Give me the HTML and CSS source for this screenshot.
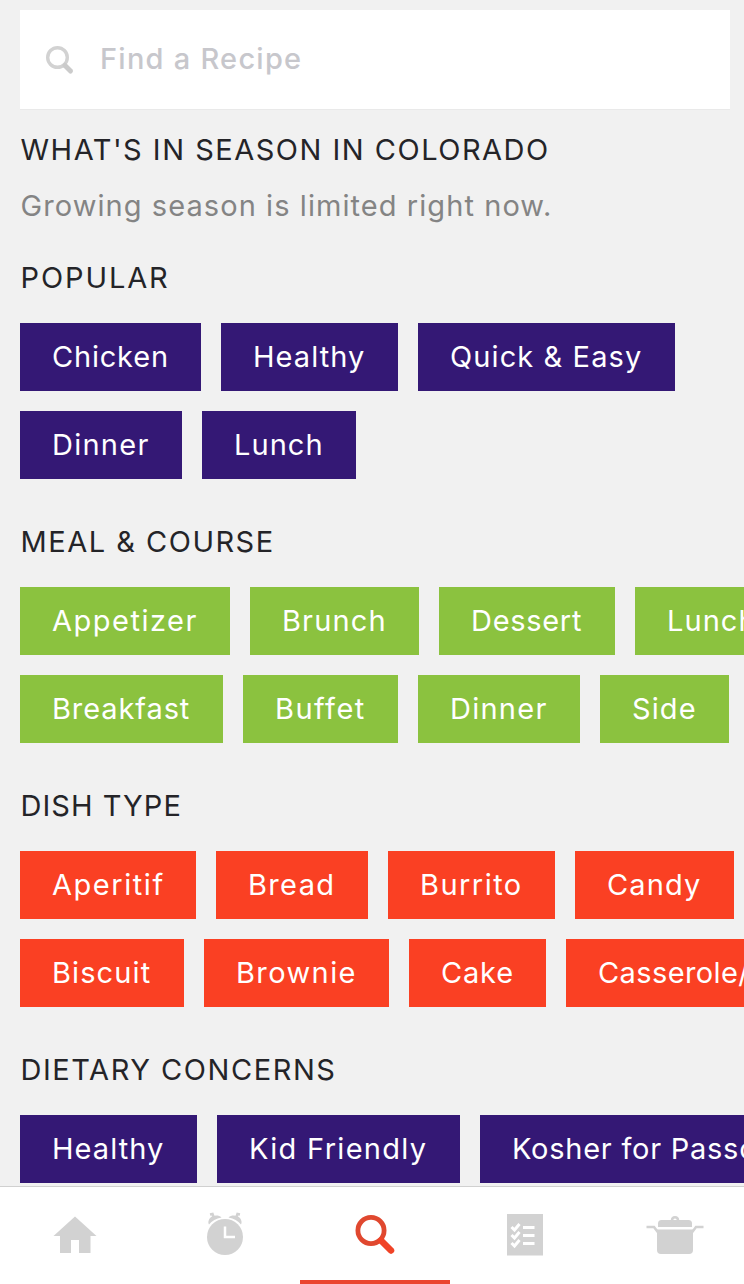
FILE: index.html
```
<!DOCTYPE html>
<html lang="en">
<head>
<meta charset="utf-8">
<meta name="viewport" content="width=device-width">
<title>Find a Recipe</title>
<link rel="stylesheet" href="styles.css">
</head>
<body>

<main class="content">
  <div class="search">
    <svg class="search-icon" width="30" height="30" viewBox="0 0 30 30">
      <circle cx="12.5" cy="12.500" r="9.8" fill="none" stroke="#d2d2d2" stroke-width="3.400"/>
      <path d="M20 20.5L25.5 26" stroke="#cbcbcb" stroke-width="5" stroke-linecap="round"/>
    </svg>
    <span class="placeholder">Find a Recipe</span>
  </div>

  <section class="season">
    <h2>What's in Season in Colorado</h2>
    <p>Growing season is limited right now.</p>
  </section>

  <section class="group purple">
    <h2 class="popular">Popular</h2>
    <div class="row">
      <a class="chip chicken">Chicken</a>
      <a class="chip healthy">Healthy</a>
      <a class="chip quick">Quick &amp; Easy</a>
    </div>
    <div class="row">
      <a class="chip dinner">Dinner</a>
      <a class="chip lunch">Lunch</a>
    </div>
  </section>

  <section class="group green">
    <h2>Meal &amp; Course</h2>
    <div class="row">
      <a class="chip appetizer">Appetizer</a>
      <a class="chip brunch">Brunch</a>
      <a class="chip dessert">Dessert</a>
      <a class="chip lunch">Lunch</a>
    </div>
    <div class="row">
      <a class="chip breakfast">Breakfast</a>
      <a class="chip buffet">Buffet</a>
      <a class="chip dinner">Dinner</a>
      <a class="chip side">Side</a>
    </div>
  </section>

  <section class="group red">
    <h2 class="dish">Dish Type</h2>
    <div class="row">
      <a class="chip aperitif">Aperitif</a>
      <a class="chip bread">Bread</a>
      <a class="chip burrito">Burrito</a>
      <a class="chip candy">Candy</a>
    </div>
    <div class="row">
      <a class="chip biscuit">Biscuit</a>
      <a class="chip brownie">Brownie</a>
      <a class="chip cake">Cake</a>
      <a class="chip casserole">Casserole/</a>
    </div>
  </section>

  <section class="group purple">
    <h2 class="dietary">Dietary Concerns</h2>
    <div class="row">
      <a class="chip healthy">Healthy</a>
      <a class="chip kid">Kid Friendly</a>
      <a class="chip kosher">Kosher for Passover</a>
    </div>
  </section>
</main>

<nav class="tabs">
  <a class="tab">
    <svg viewBox="0 0 150 97">
      <path d="M75 29.5L96.5 49H90.5V66H79V53H71V66H60V49H53.5Z"/>
    </svg>
  </a>
  <a class="tab">
    <svg viewBox="0 0 150 97">
      <circle cx="75" cy="50" r="18"/>
      <path d="M59 37.5C57.5 35 59 31 62 29.500C65 28 69 28 71.500 30.500C66 31.500 62 34 59 37.500Z"/>
      <path d="M91 37.500C92.500 35 91 31 88 29.500C85 28 81 28 78.500 30.500C84 31.500 88 34 91 37.500Z"/>
      <path class="bell" d="M60 27.500L62.500 27L63.500 30M90 27.500L87.500 27L86.500 30"/>
      <path class="hands" d="M75 39.500V50H85"/>
    </svg>
  </a>
  <a class="tab active">
    <svg viewBox="0 0 150 97">
      <circle class="lens" cx="71" cy="43.500" r="13.100"/>
      <path class="handle" d="M81 53.500L91 63.500"/>
    </svg>
  </a>
  <a class="tab">
    <svg viewBox="0 0 150 97">
      <path d="M57 27H93V68.500H57Z"/>
      <path class="checks" d="M61.500 40L64.500 43L69.500 37M61.500 48L64.500 51L69.500 45M61.500 56L64.500 59L69.500 53"/>
      <path class="lines" d="M73 40.500H84.500M73 48.500H84.500M73 56.500H84.500"/>
    </svg>
  </a>
  <a class="tab">
    <svg viewBox="0 0 150 97">
      <path d="M58 40V36.500Q58 33 61.500 33H88.500Q92 33 92 36.500V40Z"/>
      <path class="knob" d="M72 33.500C72 29 78 29 78 33.500"/>
      <path d="M57 42.500H93V63Q93 67 89 67H61Q57 67 57 63Z"/>
      <path class="grips" d="M46.500 40H54L58.500 46M103.500 40H96L91.500 46"/>
    </svg>
  </a>
</nav>

</body>
</html>
```
FILE: styles.css
```
* {
  box-sizing: border-box;
}

body {
  margin: 0;
  height: 1284px;
  display: flex;
  flex-direction: column;
  overflow: hidden;
  background: #f1f1f1;
  font: 29px/36px Inter, "Open Sans", sans-serif;
  color: #242428;
}

.content {
  flex: 1;
  min-height: 0;
  overflow: hidden;
  padding: 10px 0 0 20px;
}

.search {
  display: flex;
  align-items: center;
  height: 99px;
  margin: 0 14px 23px 0;
  padding-left: 25px;
  background: #fff;
  box-shadow: 0 1px 0 #e9e9e9;
}

.placeholder {
  margin-left: 25px;
  padding-bottom: 1px;
  font-weight: 500;
  letter-spacing: 1.25px;
  color: #c7c7cc;
}

h2 {
  margin: 0;
  padding-left: 0.5px;
  font-size: 29px;
  font-weight: 400;
  letter-spacing: 1.5px;
  text-transform: uppercase;
  white-space: nowrap;
}

h2.popular { letter-spacing: 1.9px; }
h2.dish { letter-spacing: 1.05px; }
h2.dietary { letter-spacing: 1.55px; }

.season p {
  margin: 20px 0 36px;
  padding-left: 0.5px;
  letter-spacing: 1.07px;
  color: #848484;
}

.group {
  margin-bottom: 45px;
}

.group h2 {
  margin-bottom: 27px;
}

.row {
  display: flex;
  gap: 20px;
}

.row + .row {
  margin-top: 20px;
}

.chip {
  flex: none;
  height: 68px;
  padding-left: 32px;
  line-height: 68px;
  white-space: nowrap;
  color: #fff;
}

.purple .chip { background: #341875; }
.green .chip { background: #8bc23f; }
.red .chip { background: #fa4023; }

.chicken { width: 181px; letter-spacing: 0.8px; }
.healthy { width: 177px; letter-spacing: 1.05px; }
.quick { width: 257px; letter-spacing: 1.1px; }
.dinner { width: 162px; letter-spacing: 1.25px; }
.lunch { width: 154px; letter-spacing: 1.05px; }
.appetizer { width: 210px; letter-spacing: 1.5px; }
.brunch { width: 169px; letter-spacing: 1.15px; }
.dessert { width: 176px; letter-spacing: 0.7px; }
.breakfast { width: 203px; letter-spacing: 0.9px; }
.buffet { width: 155px; letter-spacing: 1.45px; }
.side { width: 129px; letter-spacing: 1.1px; }
.aperitif { width: 176px; letter-spacing: 1.55px; }
.bread { width: 152px; letter-spacing: 1.35px; }
.burrito { width: 167px; letter-spacing: 1.45px; }
.candy { width: 159px; letter-spacing: 1.15px; }
.biscuit { width: 164px; letter-spacing: 1.1px; }
.brownie { width: 185px; letter-spacing: 1.4px; }
.cake { width: 137px; letter-spacing: 0.8px; }
.casserole { width: 320px; letter-spacing: 0.4px; }
.kid { width: 243px; letter-spacing: 1.3px; }
.kosher { width: 360px; letter-spacing: 0.75px; }

.tabs {
  display: flex;
  flex: none;
  height: 98px;
  border-top: 1px solid #d0d0d0;
  background: #fff;
}

.tab {
  width: 150px;
  flex: none;
  height: 97px;
}

.tab:last-child {
  width: 144px;
  overflow: hidden;
}

.tab svg {
  display: block;
  width: 150px;
  height: 97px;
  fill: #d2d2d2;
}

.tab.active {
  border-bottom: 4px solid #ea4630;
}

.hands,
.checks,
.lines {
  fill: none;
  stroke: #fff;
  stroke-width: 3;
}

.hands {
  stroke-width: 2.5;
}

.bell,
.knob,
.grips {
  fill: none;
  stroke: #d2d2d2;
  stroke-width: 2.5;
}

.lens,
.handle {
  fill: none;
  stroke: #e0482f;
  stroke-width: 4.8;
}

.handle {
  stroke: #f04327;
  stroke-width: 6.5;
  stroke-linecap: round;
}
```
